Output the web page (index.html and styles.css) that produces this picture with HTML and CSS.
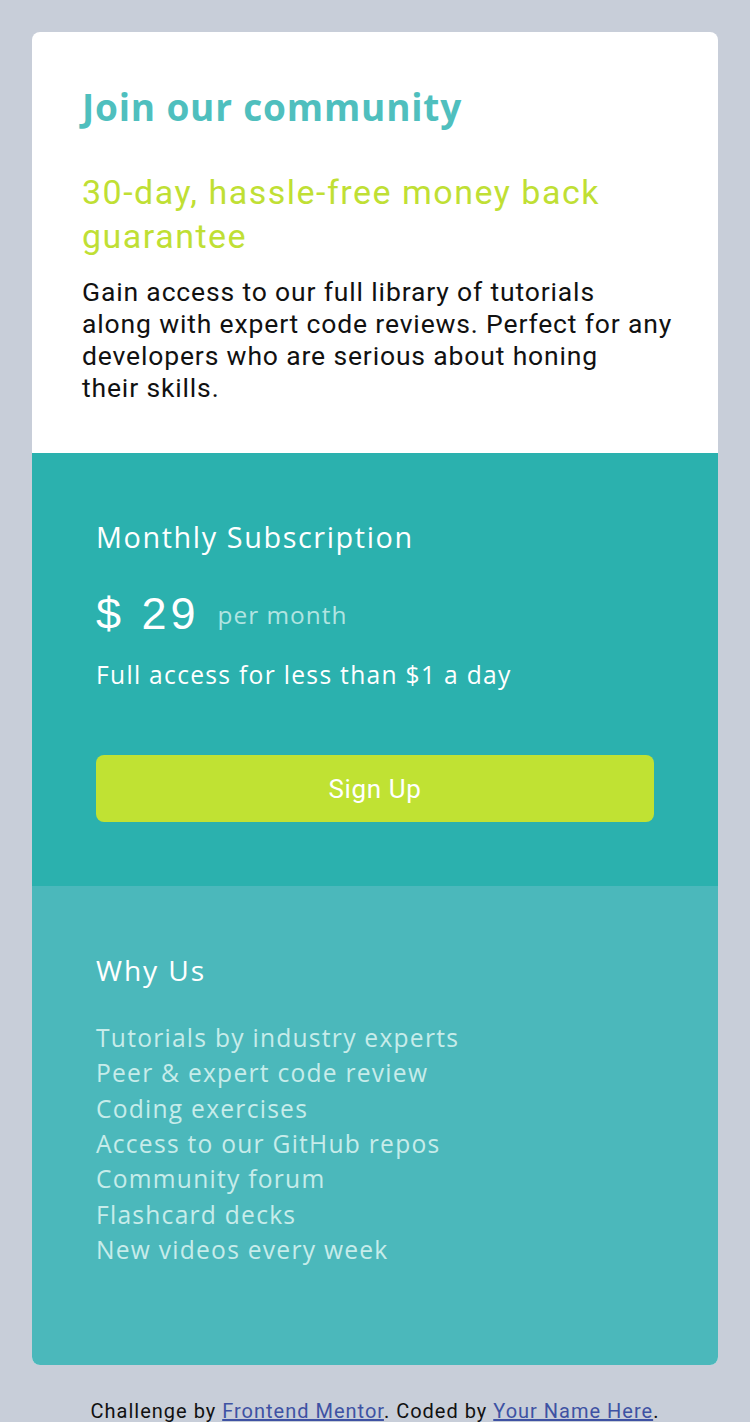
FILE: index.html
```html
<!DOCTYPE html>
<html lang="en">
<head>
<meta charset="utf-8">
<title>Single price grid</title>
<link rel="stylesheet" href="styles.css">
</head>
<body>
<main class="card">
  <section class="intro">
    <h1 class="title">Join our community</h1>
    <h2 class="guarantee">30-day, hassle-free money back guarantee</h2>
    <p class="lead">Gain access to our full library of tutorials<br>along with expert code reviews. Perfect for any<br>developers who are serious about honing<br>their skills.</p>
  </section>
  <section class="subscription">
    <h3 class="sub-title">Monthly Subscription</h3>
    <div class="price"><span class="amount">$ 29</span><span class="per">per month</span></div>
    <p class="access">Full access for less than $1 a day</p>
    <button class="signup">Sign Up</button>
  </section>
  <section class="why">
    <h3 class="why-title">Why Us</h3>
    <ul class="features">
      <li>Tutorials by industry experts</li>
      <li>Peer &amp; expert code review</li>
      <li>Coding exercises</li>
      <li>Access to our GitHub repos</li>
      <li>Community forum</li>
      <li>Flashcard decks</li>
      <li>New videos every week</li>
    </ul>
  </section>
</main>
<footer class="attribution">Challenge by <a href="#">Frontend Mentor</a>. Coded by <a href="#">Your Name Here</a>.</footer>
</body>
</html>
```
FILE: styles.css
```css
* { box-sizing: border-box; }
body {
  margin: 0;
  padding: 32px 32px 0;
  background: #c8ced9;
  font-family: "Open Sans", "Noto Sans", sans-serif;
}
.card {
  border-radius: 8px;
  overflow: hidden;
  background: #fff;
}
.intro {
  padding: 53px 20px 49px 50px;
}
.title {
  margin: 0;
  font-family: "Open Sans", sans-serif;
  font-weight: 700;
  font-size: 37px;
  letter-spacing: 0.8px;
  line-height: 44px;
  color: #4fbfbe;
}
.guarantee {
  margin: 41px 0 0;
  padding-right: 30px;
  font-family: Roboto, sans-serif;
  font-weight: 400;
  font-size: 34px;
  letter-spacing: 1.5px;
  line-height: 44px;
  color: #c0df34;
}
.lead {
  margin: 18px 0 0;
  font-family: Roboto, sans-serif;
  font-size: 26.5px;
  letter-spacing: 0.85px;
  line-height: 32px;
  color: #111;
}
.subscription {
  background: #2bb1ae;
  padding: 64px;
  color: #fff;
}
.sub-title {
  margin: 0;
  font-weight: 400;
  font-size: 28.8px;
  letter-spacing: 1.6px;
  line-height: 40px;
}
.price {
  display: flex;
  align-items: center;
  gap: 18px;
  height: 52px;
  margin-top: 31px;
}
.amount {
  font-family: "Liberation Sans", Arial, sans-serif;
  font-size: 45px;
  letter-spacing: 4px;
  line-height: 52px;
}
.per {
  font-size: 24.4px;
  letter-spacing: 1px;
  color: #b1e4e1;
}
.access {
  margin: 17px 0 0;
  font-size: 24.6px;
  letter-spacing: 1.3px;
  line-height: 36px;
}
.signup {
  display: block;
  width: 100%;
  height: 67px;
  margin-top: 62px;
  border: 0;
  border-radius: 8px;
  background: #c0e233;
  color: #fff;
  font-family: Roboto, sans-serif;
  font-size: 26px;
  letter-spacing: 0.6px;
}
.why {
  background: #4bb8bb;
  padding: 64px 64px 98px;
}
.why-title {
  margin: 0;
  font-weight: 400;
  font-size: 28.2px;
  letter-spacing: 1.9px;
  line-height: 40px;
  color: #fff;
}
.features {
  list-style: none;
  margin: 30px 0 0;
  padding: 0;
  color: #c7ecea;
  font-size: 24.6px;
  letter-spacing: 1.25px;
  line-height: 35.33px;
}
.attribution {
  text-align: center;
  padding: 34px 0 0;
  font-family: Roboto, sans-serif;
  font-size: 20px;
  letter-spacing: 1px;
  line-height: 24px;
  color: #111;
}
.attribution a {
  color: #3e52a3;
}
```
